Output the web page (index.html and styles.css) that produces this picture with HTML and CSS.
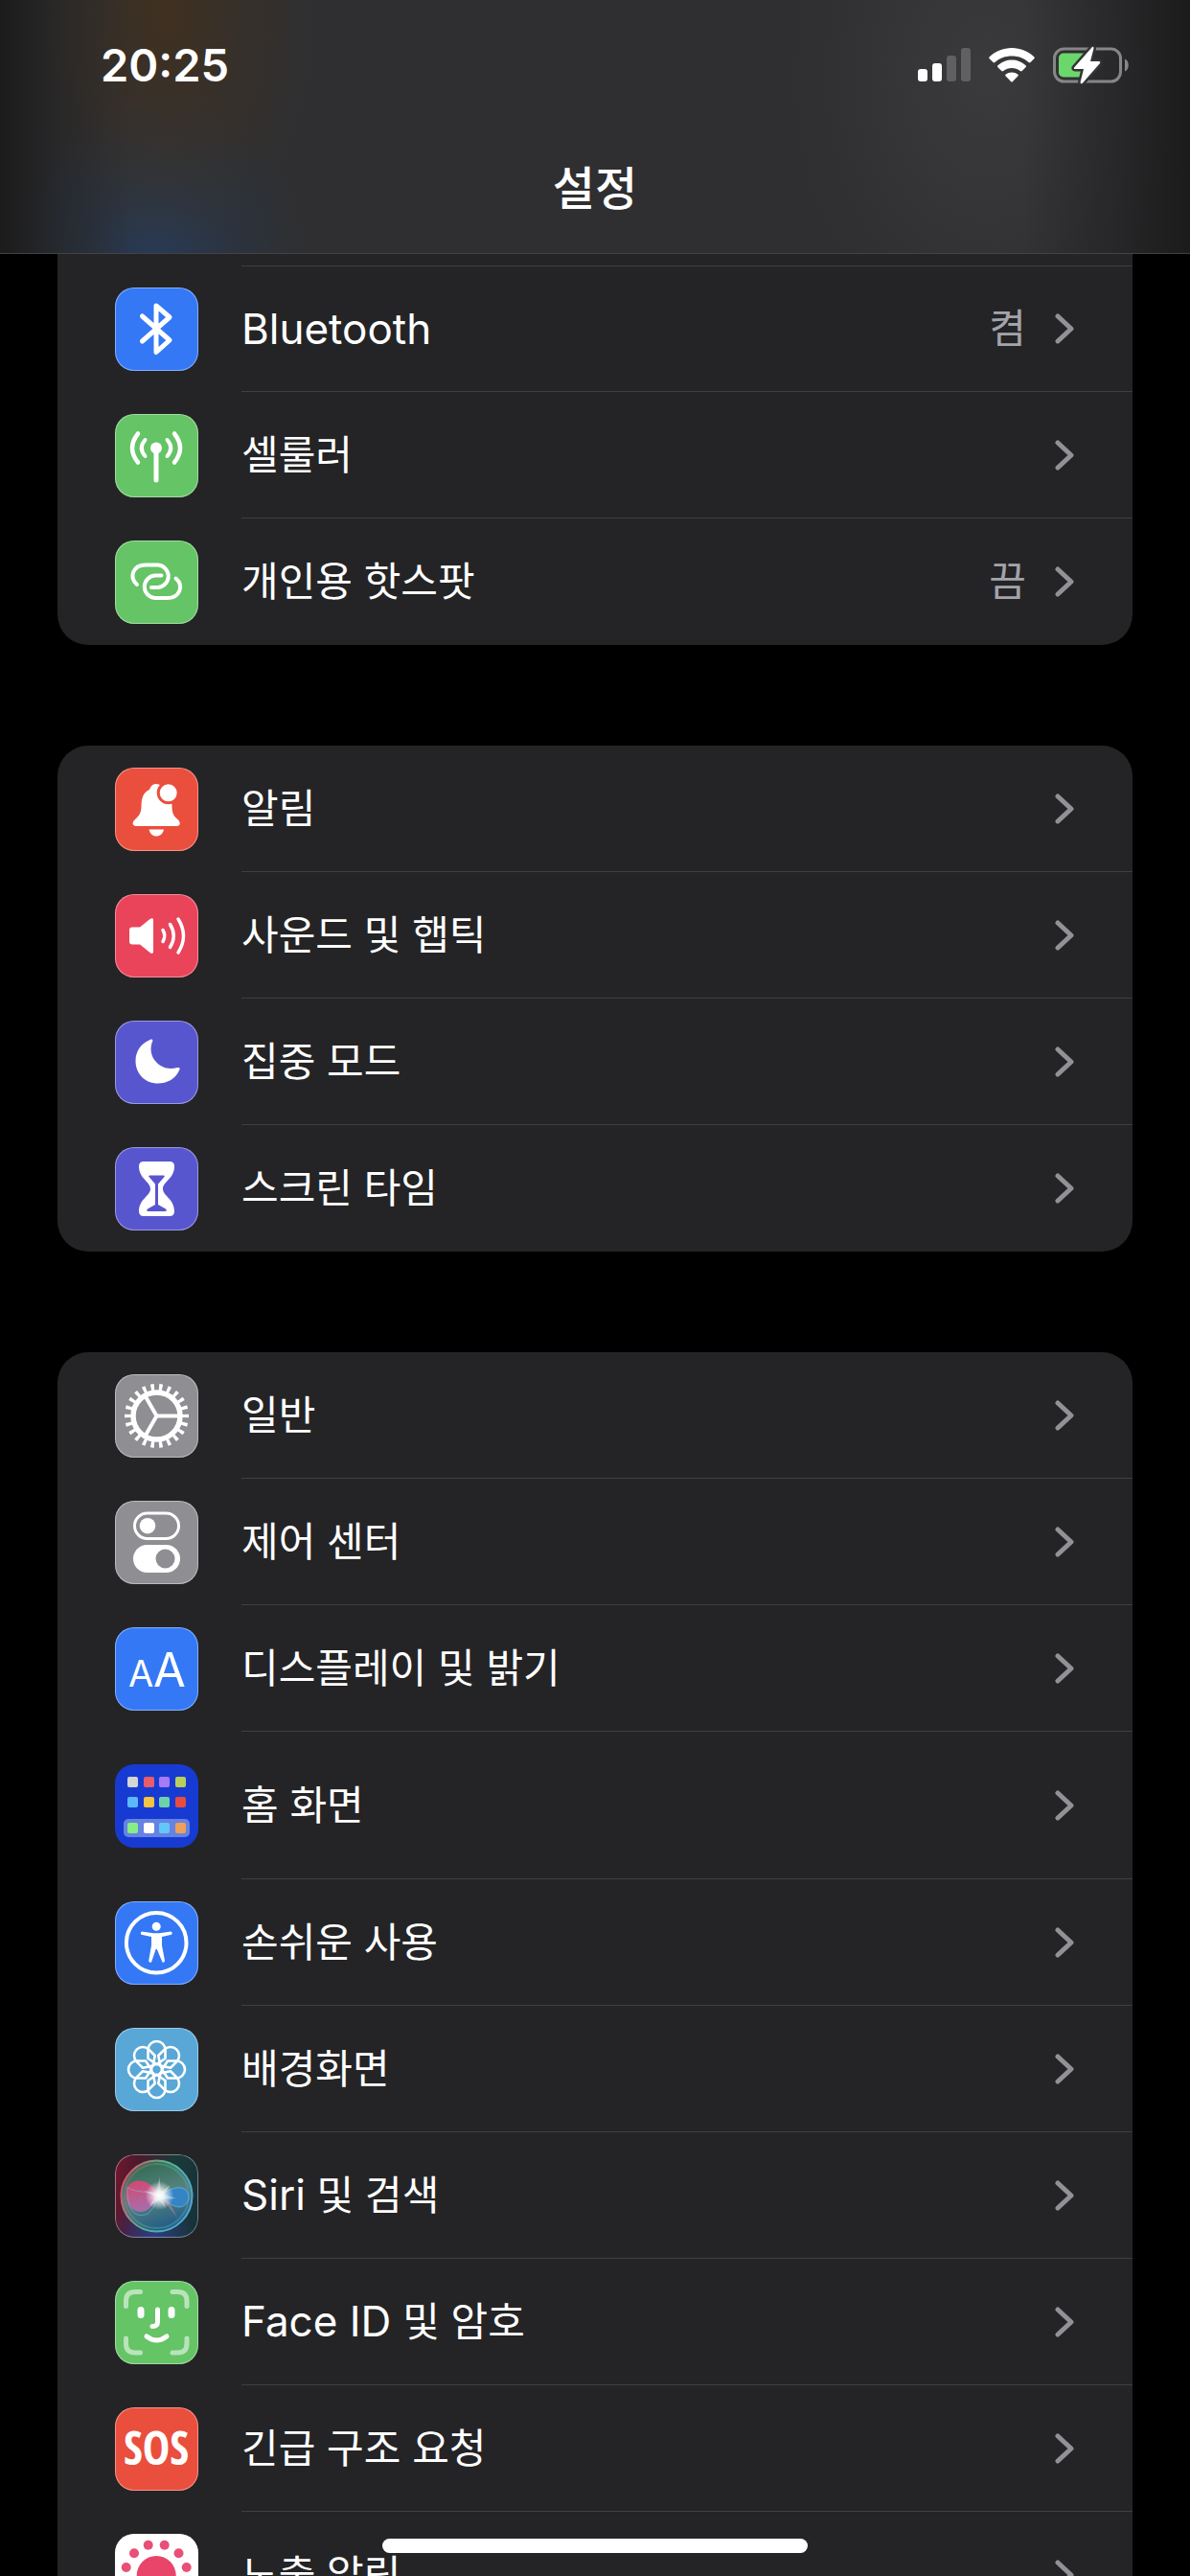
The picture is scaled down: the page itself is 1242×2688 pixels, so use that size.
FILE: index.html
```html
<!DOCTYPE html>
<html lang="ko">
<head>
<meta charset="utf-8">
<meta name="viewport" content="width=device-width, initial-scale=1">
<title>설정</title>
<link rel="stylesheet" href="styles.css">
</head>
<body>
<svg class="defs" aria-hidden="true">
  <defs>
    <symbol id="chevron" viewBox="0 0 20 32"><path d="M3 3L17 16L3 29" fill="none" stroke="currentColor" stroke-width="5" stroke-linecap="round" stroke-linejoin="round"/></symbol>
  </defs>
</svg>

<header class="topbar">
  <div class="status">
    <time class="clock">20:25</time>
    <div class="indicators">
      <svg width="55" height="36" viewBox="0 0 55 36" aria-label="신호">
        <rect x="0" y="22" width="10" height="13" rx="3" fill="#fff"/>
        <rect x="15" y="16" width="10" height="19" rx="3" fill="#fff"/>
        <rect x="30" y="8" width="10" height="27" rx="3" fill="#606062"/>
        <rect x="45" y="0" width="10" height="35" rx="3" fill="#606062"/>
      </svg>
      <svg width="48" height="36" viewBox="0 0 48 36" aria-label="Wi-Fi">
        <path fill="#fff" d="M24 0C33 0 41 3.500 47 9C48 10 48 10.500 47.300 11.300L43.500 15C42.800 15.700 42.300 15.600 41.600 15C36.500 10.500 30.500 8.500 24 8.500S11.500 10.500 6.400 15C5.700 15.600 5.200 15.700 4.500 15L.7 11.300C0 10.500 0 10 1 9C7 3.500 15 0 24 0Z"/>
        <path fill="#fff" d="M24 12.500C29.500 12.500 34.500 14.500 38.300 18C39.200 18.800 39.100 19.500 38.500 20.200L34.700 24C34 24.700 33.400 24.500 32.800 24C30.300 22 27.300 21 24 21S17.700 22 15.200 24C14.600 24.500 14 24.700 13.300 24L9.500 20.200C8.900 19.500 8.800 18.800 9.700 18C13.500 14.500 18.500 12.500 24 12.500Z"/>
        <path fill="#fff" d="M24 25.500C26.500 25.500 28.500 26.200 30.200 27.500C31 28.200 31 28.900 30.300 29.600L25 35C24.300 35.700 23.700 35.700 23 35L17.700 29.600C17 28.900 17 28.200 17.800 27.500C19.500 26.200 21.500 25.500 24 25.500Z"/>
      </svg>
      <svg width="80" height="40" viewBox="0 0 80 40" aria-label="배터리 충전 중">
        <rect x="1.500" y="3" width="69" height="34" rx="10" fill="none" stroke="#868688" stroke-width="3"/>
        <rect x="6" y="7.500" width="29" height="25" rx="5" fill="#6bd76b"/>
        <path d="M75 13.500C80 15 80 25 75 26.500Z" fill="#868688"/>
        <path d="M41 1L22 22.500Q21.500 24 23 24H32L28.500 38Q29.500 40.500 31.500 38L49 18Q49.500 16 48 16H39L42.500 2.500Q42.500 0 41 1Z" fill="#fff" stroke="#343436" stroke-width="5" paint-order="stroke"/>
      </svg>
    </div>
  </div>
  <h1 class="title">설정</h1>
</header>

<main class="settings">
  <nav class="card card-continued">
    <a class="row" href="#bluetooth">
      <svg class="tile blue" viewBox="0 0 87 87"><path class="line" stroke-width="5" d="M28.500 30L57 55L43 67.500V19L57 31L28.500 56"/></svg>
      <span class="body"><span class="label"><span class="latin">Bluetooth</span></span><span class="value">켬</span><svg class="chevron"><use href="#chevron"/></svg></span>
    </a>
    <a class="row" href="#cellular">
      <svg class="tile green" viewBox="0 0 87 87"><g class="line" stroke-width="5"><path d="M43 36V69"/><path d="M31.500 27Q24 35.500 31.500 44M54.500 27Q62 35.500 54.500 44" stroke-width="4"/><path d="M24 20.500Q12 35.500 24 50.500M62 20.500Q74 35.500 62 50.500" stroke-width="4.500"/></g><circle cx="43" cy="35.500" r="6" fill="#fff"/></svg>
      <span class="body"><span class="label">셀룰러</span><svg class="chevron"><use href="#chevron"/></svg></span>
    </a>
    <a class="row" href="#hotspot">
      <svg class="tile green" viewBox="0 0 87 87"><g class="line" stroke-width="4"><path d="M23 46C14 38 19 25.500 32 25.500H45A11.800 11.800 0 0 1 45 49H38"/><path d="M63.500 39.500C72.500 47.500 67.500 60 54.500 60H41.500A11.800 11.800 0 0 1 41.500 36.500H48.500"/></g></svg>
      <span class="body"><span class="label">개인용 핫스팟</span><span class="value">끔</span><svg class="chevron"><use href="#chevron"/></svg></span>
    </a>
  </nav>

  <nav class="card">
    <a class="row" href="#notifications">
      <svg class="tile red" viewBox="0 0 87 87"><path fill="#fff" d="M43 17C39 17 37 20 36 23C29 26 27.500 33 27.500 40C27.500 49 24 51 20.500 54.500C17 58 19 61 22 61H64.500C68 61 69 58 66 54.500C62 51 59.500 49 59.500 40C59.500 33 57 26 50 23C49 20 47 17 43 17Z"/><path fill="#fff" d="M35.500 64.500H51C50 69 47 71.500 43.200 71.500S36.500 69 35.500 64.500Z"/><circle cx="55.700" cy="26.300" r="10.500" fill="#fff" stroke="#ea4e3d" stroke-width="3"/></svg>
      <span class="body"><span class="label">알림</span><svg class="chevron"><use href="#chevron"/></svg></span>
    </a>
    <a class="row" href="#sounds">
      <svg class="tile pink" viewBox="0 0 87 87"><path fill="#fff" d="M18 34.500H26L36.500 26C38.500 24.500 40 25 40 27V60C40 62 38.500 62.500 36.500 61L26 52.500H18Q15 52.500 15 49.500V37.500Q15 34.500 18 34.500Z"/><path class="line" stroke-width="3.500" d="M50 37.500Q53.500 43.500 50 49.500M57.500 31.500Q65 43.500 57.500 55.500M66 26Q77 43.500 66 61"/></svg>
      <span class="body"><span class="label">사운드 및 햅틱</span><svg class="chevron"><use href="#chevron"/></svg></span>
    </a>
    <a class="row" href="#focus">
      <svg class="tile indigo" viewBox="0 0 87 87"><path fill="#fff" d="M36.500 20C39 19 40 20 39 22C36.500 28 37 36 42 42C48.500 50 57 51 65 49C68 48.500 68 50.500 67 52C63 61 54 65.500 45 65.500C31 65.500 21.500 55 21.500 42C21.500 32 27 24 36.500 20Z"/></svg>
      <span class="body"><span class="label">집중 모드</span><svg class="chevron"><use href="#chevron"/></svg></span>
    </a>
    <a class="row" href="#screentime">
      <svg class="tile indigo" viewBox="0 0 87 87"><path fill="#fff" d="M30 15H57Q62 15 62 20C62 33 50 36 50 43.500S62 54 62 67Q62 72 57 72H30Q25 72 25 67C25 54 37 51 37 43.500S25 33 25 20Q25 15 30 15Z"/><path fill="#5856ce" d="M36 29.500H51Q52.500 30 51.500 31L45 38.500V60L53 64.500Q55 67 52 67H35Q32 67 34 64.500L42 60V38.500L35.500 31Q34.500 30 36 29.500Z"/></svg>
      <span class="body"><span class="label">스크린 타임</span><svg class="chevron"><use href="#chevron"/></svg></span>
    </a>
  </nav>

  <nav class="card">
    <a class="row" href="#general">
      <svg class="tile gray" viewBox="0 0 87 87"><g fill="none" stroke="#fff"><circle cx="43.500" cy="43.500" r="24.500" stroke-width="5.500"/><circle cx="43.500" cy="43.500" r="30" stroke-width="7" pathLength="220" stroke-dasharray="4 6" stroke-dashoffset="2"/><path d="M43.500 43.500H66M43.500 43.500L32 23.500M43.500 43.500L32 63.500" stroke-width="4"/></g></svg>
      <span class="body"><span class="label">일반</span><svg class="chevron"><use href="#chevron"/></svg></span>
    </a>
    <a class="row" href="#control-center">
      <svg class="tile gray" viewBox="0 0 87 87"><rect x="20.500" y="13" width="46" height="26.500" rx="13.200" fill="none" stroke="#fff" stroke-width="3"/><circle cx="34" cy="26.200" r="8.300" fill="#fff"/><rect x="19" y="46" width="49" height="29" rx="14.500" fill="#fff"/><circle cx="52.500" cy="60.500" r="10" fill="#8e8e93"/></svg>
      <span class="body"><span class="label">제어 센터</span><svg class="chevron"><use href="#chevron"/></svg></span>
    </a>
    <a class="row" href="#display">
      <svg class="tile blue" viewBox="0 0 87 87"><g class="glyph"><text x="27" y="62" font-size="38">A</text><text x="57" y="62" font-size="49">A</text></g></svg>
      <span class="body"><span class="label">디스플레이 및 밝기</span><svg class="chevron"><use href="#chevron"/></svg></span>
    </a>
    <a class="row row-tall" href="#home">
      <svg class="tile royal" viewBox="0 0 87 87"><rect x="9" y="57" width="69" height="19" rx="5" fill="#6683e1"/><rect x="13" y="13" width="11" height="11" rx="2" fill="#d5d5d5"/><rect x="30" y="13" width="11" height="11" rx="2" fill="#e85c6c"/><rect x="46" y="13" width="11" height="11" rx="2" fill="#a97af8"/><rect x="63" y="13" width="11" height="11" rx="2" fill="#b8d05a"/><rect x="13" y="34" width="11" height="11" rx="2" fill="#5cb8fa"/><rect x="30" y="34" width="11" height="11" rx="2" fill="#f5c242"/><rect x="46" y="34" width="11" height="11" rx="2" fill="#6ed2a8"/><rect x="63" y="34" width="11" height="11" rx="2" fill="#e84c3c"/><rect x="13" y="61" width="11" height="11" rx="2" fill="#86ee84"/><rect x="30" y="61" width="11" height="11" rx="2" fill="#fff"/><rect x="46" y="61" width="11" height="11" rx="2" fill="#62c8fa"/><rect x="63" y="61" width="11" height="11" rx="2" fill="#f0a058"/></svg>
      <span class="body"><span class="label">홈 화면</span><svg class="chevron"><use href="#chevron"/></svg></span>
    </a>
    <a class="row" href="#accessibility">
      <svg class="tile blue" viewBox="0 0 87 87"><circle cx="43.200" cy="43.200" r="31.300" fill="none" stroke="#fff" stroke-width="4"/><circle cx="43.200" cy="26.300" r="4.500" fill="#fff"/><path fill="#fff" d="M28 31.500L40 33.200H46.500L58.500 31.500Q60.500 33 59 34.700L49 37V46L52 62Q51.500 64.500 49.500 63.500L43.800 50H42.600L38 63.500Q35.500 64.500 35.200 62L38 46V37L27.500 34.700Q26 33 28 31.500Z"/></svg>
      <span class="body"><span class="label">손쉬운 사용</span><svg class="chevron"><use href="#chevron"/></svg></span>
    </a>
    <a class="row" href="#wallpaper">
      <svg class="tile sky" viewBox="0 0 87 87"><g fill="none" stroke="#fff" stroke-width="2.600" stroke-linejoin="round"><circle cx="43.500" cy="43.500" r="5.500"/><g id="petals"><path id="petal" d="M43.500 38L34.500 32V23A9 9 0 0 1 52.500 23V32Z"/><use href="#petal" transform="rotate(45 43.500 43.500)"/><use href="#petal" transform="rotate(90 43.500 43.500)"/><use href="#petal" transform="rotate(135 43.500 43.500)"/></g><use href="#petals" transform="rotate(180 43.500 43.500)"/></g></svg>
      <span class="body"><span class="label">배경화면</span><svg class="chevron"><use href="#chevron"/></svg></span>
    </a>
    <a class="row" href="#siri">
      <svg class="tile siri" viewBox="0 0 87 87">
        <defs>
          <linearGradient id="ring" x1="0" y1=".3" x2="1" y2=".7"><stop offset="0" stop-color="#e0506a"/><stop offset=".45" stop-color="#57b58c"/><stop offset="1" stop-color="#4fa6d8"/></linearGradient>
          <linearGradient id="orb" x1=".3" y1="0" x2=".6" y2="1"><stop offset="0" stop-color="#2f6a50"/><stop offset=".5" stop-color="#55837f"/><stop offset="1" stop-color="#1f5a86"/></linearGradient>
          <linearGradient id="lobe" x1="0" y1="0" x2=".3" y2="1"><stop offset="0" stop-color="#e8406c"/><stop offset="1" stop-color="#b06cae"/></linearGradient>
          <radialGradient id="flare"><stop offset="0" stop-color="#fff"/><stop offset=".3" stop-color="#fff" stop-opacity=".85"/><stop offset="1" stop-color="#fff" stop-opacity="0"/></radialGradient>
        </defs>
        <circle cx="43.500" cy="43.500" r="37" fill="url(#orb)" stroke="url(#ring)" stroke-width="2"/>
        <circle cx="43.500" cy="43.500" r="33.500" fill="none" stroke="url(#ring)" stroke-opacity=".4" stroke-width="2"/>
        <path d="M47 43C38 27 20 22 13 35C8 50 18 61 28 60C37 59 41 50 47 43Z" fill="url(#lobe)" opacity=".9"/>
        <path d="M47 43C35 38 18 40 13 34C12 56 20 68 34 62C41 57 43 48 47 43Z" fill="none" stroke="#8cc0e0" stroke-opacity=".5"/>
        <path d="M47 43C57 36 66 32 74 37C80 44 76 54 68 55C59 55 53 48 47 43Z" fill="#3584c4" stroke="#7cc8e8" stroke-opacity=".6"/>
        <path d="M48 45L65 66L57 50ZM44 47L30 72L38 58Z" fill="#c48ca8" opacity=".5"/>
        <circle cx="46.500" cy="43" r="15" fill="url(#flare)"/>
        <path d="M46.500 24L48 39L58 32L51 42L64 46L50 47L53 56L46 48L36 54L42 44L30 38L43 40Z" fill="#fff" opacity=".35"/>
      </svg>
      <span class="body"><span class="label"><span class="latin">Siri</span> 및 검색</span><svg class="chevron"><use href="#chevron"/></svg></span>
    </a>
    <a class="row" href="#faceid">
      <svg class="tile green" viewBox="0 0 87 87"><g class="line" stroke-width="5"><path stroke-opacity=".55" d="M11.500 26.500V21Q11.500 11.500 21 11.500H26.500M60 11.500H65.500Q75 11.500 75 21V26.500M75 60V65.500Q75 75 65.500 75H60M26.500 75H21Q11.500 75 11.500 65.500V60"/><path d="M27 30.500V35.500M59 30.500V35.500" stroke-width="7"/><path d="M44.500 30V43Q44.500 47.500 39 47.500M33 58Q43.500 66 54 58"/></g></svg>
      <span class="body"><span class="label"><span class="latin">Face ID</span> 및 암호</span><svg class="chevron"><use href="#chevron"/></svg></span>
    </a>
    <a class="row" href="#sos">
      <svg class="tile red" viewBox="0 0 87 87"><text class="sos" x="43" y="60">SOS</text></svg>
      <span class="body"><span class="label">긴급 구조 요청</span><svg class="chevron"><use href="#chevron"/></svg></span>
    </a>
    <a class="row" href="#exposure">
      <svg class="tile white" viewBox="0 0 87 87"><g fill="#e94f77"><circle cx="43.200" cy="43.500" r="20.500" fill="#e9446a"/><g id="dots"><circle cx="34.700" cy="11.700" r="5"/><circle cx="51.700" cy="11.700" r="5"/><circle cx="66.500" cy="20.200" r="5"/><circle cx="20" cy="20.200" r="5"/><circle cx="11.700" cy="35" r="5"/><circle cx="74.700" cy="35" r="5"/></g><use href="#dots" transform="rotate(180 43.200 43.500)"/></g></svg>
      <span class="body"><span class="label">노출 알림</span><svg class="chevron"><use href="#chevron"/></svg></span>
    </a>
  </nav>
</main>
<div class="home-indicator"></div>
</body>
</html>
```
FILE: styles.css
```css
* { box-sizing: border-box; }

html { height: 100%; }

body {
  margin: 0;
  height: 100%;
  overflow: hidden;
  background: #000;
  color: #fff;
  font-family: Inter, "Noto Sans CJK KR", sans-serif;
}

.defs { position: absolute; width: 0; height: 0; }

/* Status bar and title, over the blurred list */
.topbar {
  height: 265px;
  border-bottom: 1px solid #434345;
  background:
    linear-gradient(90deg, rgba(24, 24, 25, .85) 0, rgba(24, 24, 25, .3) 5%, rgba(24, 24, 25, 0) 11%, rgba(24, 24, 25, 0) 86%, rgba(24, 24, 25, .4) 94%, rgba(24, 24, 25, .85) 100%),
    radial-gradient(150px 260px at 175px 10px, rgba(68, 48, 28, .8), rgba(64, 50, 34, .45) 50%, transparent),
    radial-gradient(150px 170px at 165px 264px, rgba(38, 60, 92, .85), rgba(40, 56, 78, .5) 50%, transparent),
    radial-gradient(200px 280px at 1030px 80px, rgba(66, 66, 68, .6), transparent),
    #2f2f31;
}

.status {
  display: flex;
  justify-content: space-between;
  align-items: center;
  height: 136px;
  padding: 0 63px 0 105px;
}

.clock { font-size: 47px; line-height: 60px; font-weight: 600; }

.indicators { display: flex; align-items: center; gap: 19px; }

.title {
  margin: 0;
  text-align: center;
  font-size: 48px;
  line-height: 122px;
  font-weight: 500;
}

.settings {
  display: flex;
  flex-direction: column;
  gap: 105px;
  padding: 0 60px;
}

.card {
  display: flex;
  flex-direction: column;
  border-radius: 32px;
  background: #242426;
  overflow: hidden;
}

.card-continued {
  padding-top: 12px;
  border-radius: 0 0 32px 32px;
}

.row {
  display: flex;
  align-items: center;
  gap: 45px;
  height: 132px;
  padding-left: 60px;
  color: inherit;
  text-decoration: none;
}

.row-tall { height: 154px; }

.body {
  display: flex;
  align-items: center;
  flex: 1;
  height: 100%;
  padding-right: 61px;
  border-bottom: 1px solid #3f3f42;
}

.row:last-child .body { border-bottom-color: transparent; }

.card-continued .row:first-child .body { border-top: 1px solid #3f3f42; }

.label { flex: 1; font-size: 42px; line-height: 60px; }

.latin { font-size: 44px; }

.value { margin-right: 30px; font-size: 42px; line-height: 60px; color: #a3a3aa; }

.chevron { width: 20px; height: 32px; color: #919196; }

.tile {
  flex: none;
  width: 87px;
  height: 87px;
  border-radius: 20px;
  box-shadow: inset 0 0 0 1px rgba(255, 255, 255, .4);
}

.blue { background: #3478f6; }
.green { background: #65c466; }
.red { background: #ea4e3d; }
.pink { background: #ea445a; }
.indigo { background: #5856ce; }
.gray { background: #8e8e93; }
.sky { background: #58a7d7; }
.white { background: #fff; }
.royal { background: #173bd2; box-shadow: none; }
.siri {
  background:
    radial-gradient(circle at 45% 100%, rgba(50, 60, 150, .8), transparent 45%),
    linear-gradient(100deg, #74182f 0, #4a1a2c 25%, #1c3a3a 60%, #163038 100%);
}

.line { fill: none; stroke: #fff; stroke-linecap: round; stroke-linejoin: round; }

.glyph { fill: #fff; font-family: Inter, sans-serif; font-weight: 400; text-anchor: middle; }

.sos {
  fill: #fff;
  font-family: "Liberation Sans Narrow", "Open Sans Condensed", "Liberation Sans", sans-serif;
  font-size: 48px;
  font-weight: 700;
  text-anchor: middle;
}

.home-indicator {
  position: fixed;
  left: 50%;
  bottom: 24px;
  width: 444px;
  height: 15px;
  border-radius: 8px;
  background: #fff;
  transform: translateX(-50%);
}
```
